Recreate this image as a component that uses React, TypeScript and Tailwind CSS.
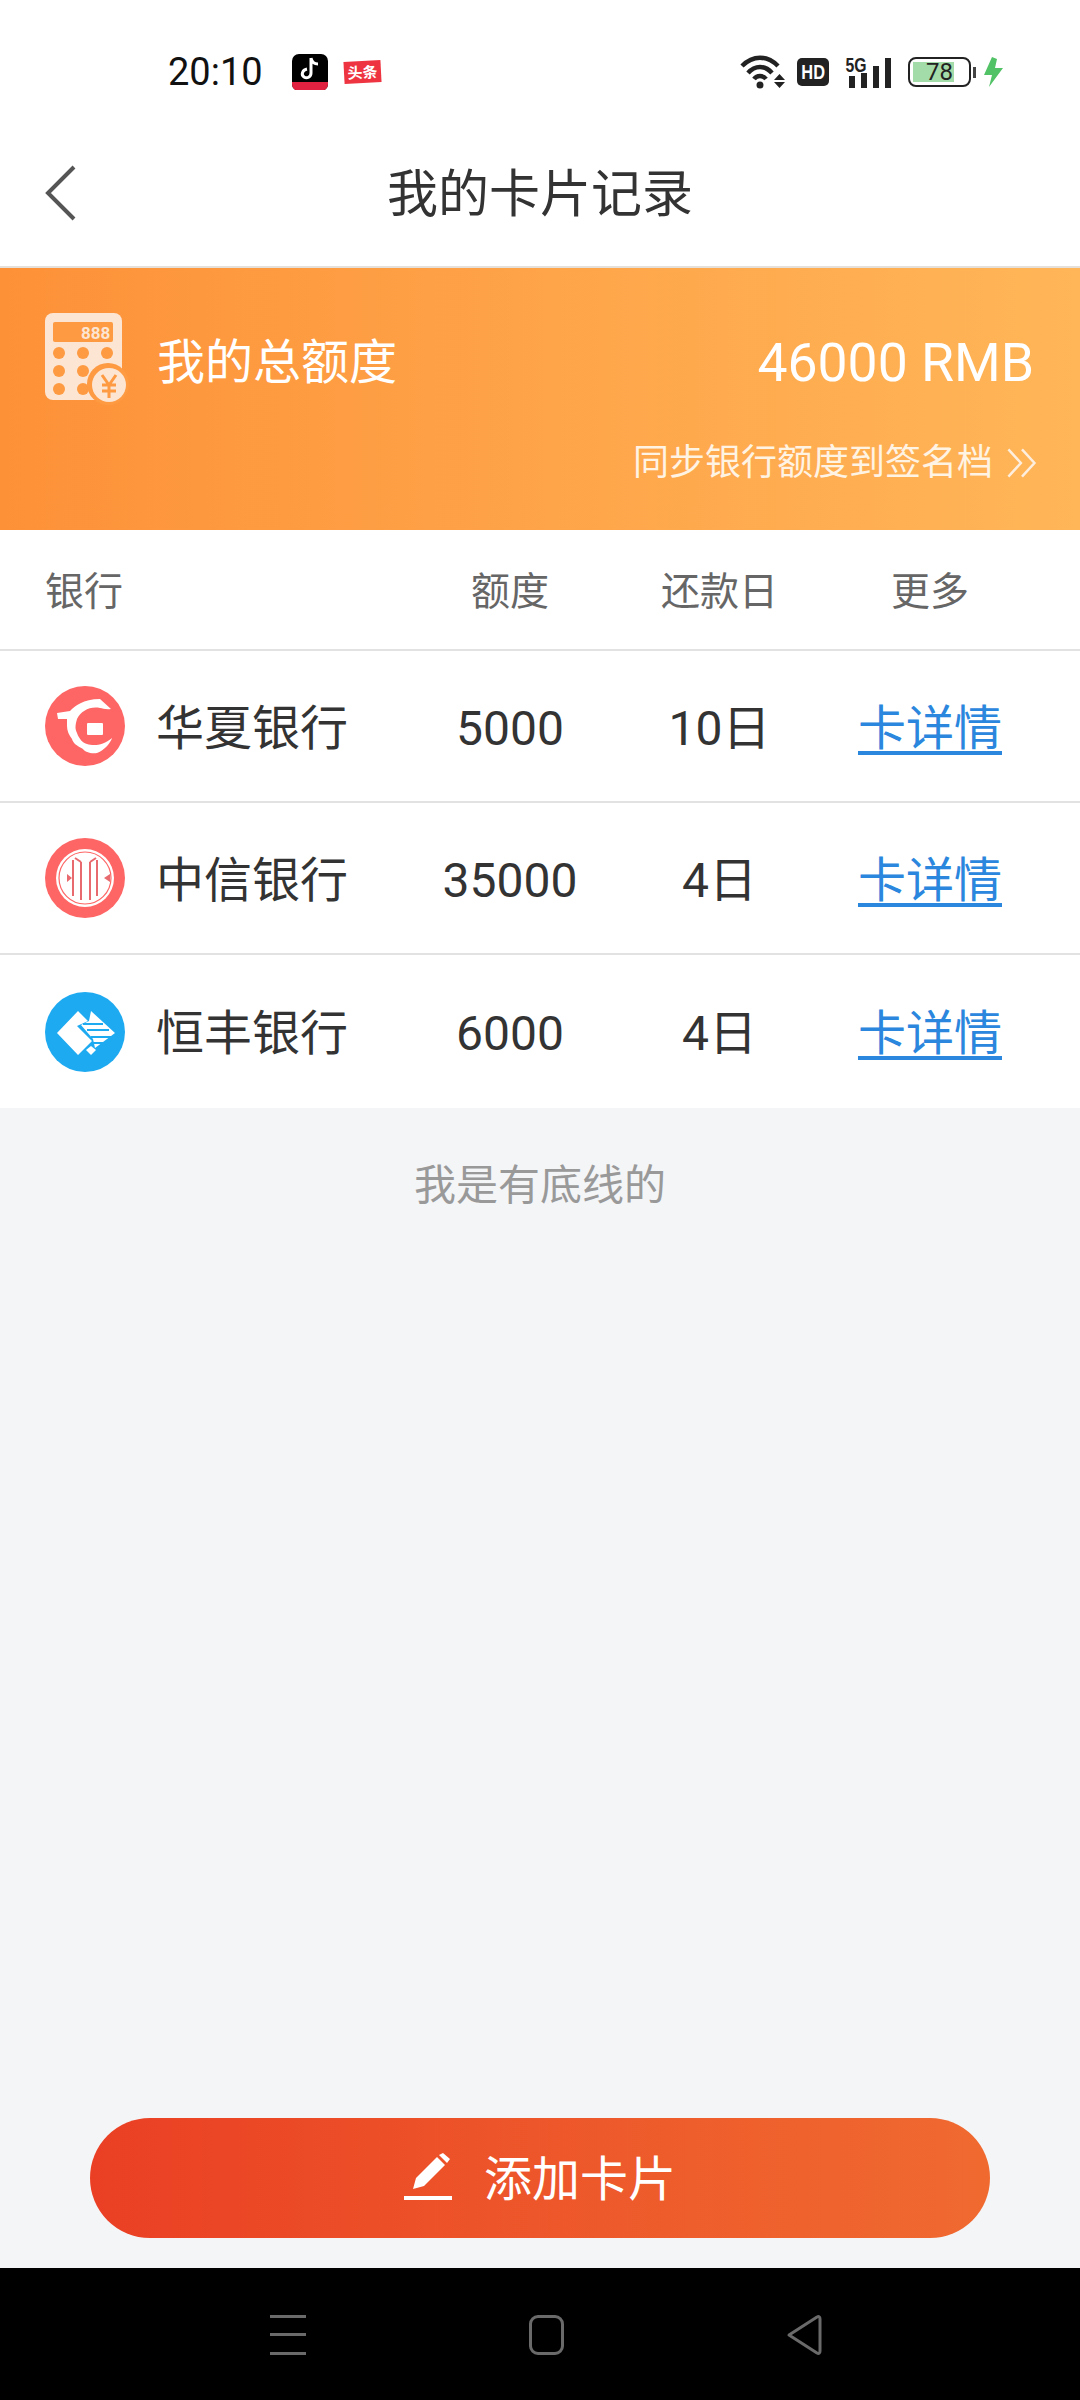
const cjk = "font-['Roboto','Noto_Sans_CJK_SC',sans-serif]";

const banks = [
  { name: "华夏银行", limit: "5000", due: "10日", logo: <HuaxiaLogo />, height: "h-[152px]" },
  { name: "中信银行", limit: "35000", due: "4日", logo: <CiticLogo />, height: "h-[152px]" },
  { name: "恒丰银行", limit: "6000", due: "4日", logo: <HengfengLogo />, height: "h-[153px]" },
];

function HuaxiaLogo() {
  return (
    <svg width="80" height="80" viewBox="0 0 80 80">
      <circle cx="40" cy="40" r="40" fill="#fe6565" />
      <path
        d="M12 27 L25 25 C30 20 38 13 55 13 L66 23 C60 24 58 22 55 22 C45 20 36 25 32 33 C30 40 30 43 32 47 C34 53 38 57 42 58 C48 60 58 60 67 52 C66 56 60 64 52 67 C46 68 40 66 38 63 C32 60 28 57 27 53 C24 49 22 45 22 40 L22 33 L13 33 Z"
        fill="#fff"
      />
      <rect x="42" y="37" width="16" height="12" rx="1" fill="#fff" />
    </svg>
  );
}

function CiticLogo() {
  return (
    <svg width="80" height="80" viewBox="0 0 80 80">
      <circle cx="40" cy="40" r="40" fill="#fe6565" />
      <circle cx="40" cy="40" r="29" fill="#fff" />
      <circle cx="40" cy="40" r="26" fill="none" stroke="#fe6565" strokeWidth="1.2" />
      <g fill="none" stroke="#e86a6e" strokeWidth="2">
        <path d="M28 22 V58" />
        <path d="M52 22 V58" />
        <path d="M36 24 L36 62" />
        <path d="M45 24 L45 62" />
        <path d="M36 24 L30 20" />
        <path d="M45 24 L51 20" />
      </g>
      <path d="M22 36 L27 40 L22 44 Z" fill="#e86a6e" />
      <path d="M65 36 L59 40 L65 44 Z" fill="#e86a6e" />
    </svg>
  );
}

function HengfengLogo() {
  return (
    <svg width="80" height="80" viewBox="0 0 80 80">
      <circle cx="40" cy="40" r="40" fill="#1eaaf1" />
      <path d="M12 41 L33 19 L43 29 L32 34 L47 49 L33 63 Z" fill="#fff" />
      <path d="M46 19 L70 41 L50 56 L48 47 L36 33 L44 29 Z" fill="#fff" />
      <path d="M38 32 H58 M42 38 H64 M46 45 H68 M46 51 H62" stroke="#1eaaf1" strokeWidth="1.8" />
      <path d="M46 54 L51 58 L46 63 L41 58 Z" fill="#fff" />
    </svg>
  );
}

function CalculatorIcon() {
  return (
    <svg width="84" height="92" viewBox="0 0 84 92">
      <rect x="0" y="0" width="77" height="87" rx="8" fill="#fce5d2" />
      <rect x="8" y="9" width="60" height="20" rx="2" fill="#fd9a42" />
      <text x="36" y="26" fontSize="17" fontWeight="700" fill="#fce5d2" fontFamily="Roboto">888</text>
      {[8, 26, 44].flatMap((y) =>
        [14, 38, 62].map((x) => <circle key={`${x}-${y}`} cx={x} cy={y + 32} r="6" fill="#fd9a42" />),
      )}
      <circle cx="63" cy="71" r="21" fill="#fd9a42" />
      <circle cx="64" cy="72" r="17" fill="#fce5d2" />
      <path d="M57 62 L64 72 L71 62 M57 72 H71 M57 78 H71 M64 72 V85" stroke="#fd9a42" strokeWidth="3" fill="none" />
    </svg>
  );
}

function StatusBar() {
  return (
    <div className={`h-[90px] shrink-0 bg-white flex items-center pt-[54px] pl-[168px] pr-[76px] ${cjk}`}>
      <span className="text-[38px] leading-none text-[#111] w-[124px]">20:10</span>
      <div className="relative w-[36px] h-[37px] rounded-[7px] bg-black overflow-hidden flex justify-center">
        <svg width="22" height="26" viewBox="0 0 22 26" className="mt-[2px]">
          <path d="M12 2 V17 C12 21 8 23 5 21 C2 19 3 14 8 13 M12 2 C13 6 16 8 19 8" fill="none" stroke="#fff" strokeWidth="3" />
        </svg>
        <div className="absolute bottom-0 inset-x-0 h-[9px] bg-[#e0213f]" />
      </div>
      <div className="ml-[16px] w-[37px] h-[22px] -rotate-3 bg-[#ee3440] text-white text-[15px] leading-[22px] font-bold text-center font-['Noto_Sans_CJK_SC',sans-serif]">
        头条
      </div>
      <div className="ml-auto flex items-center">
        <svg width="48" height="34" viewBox="0 0 48 34">
          <path d="M3 11 C14 0 28 0 39 11" fill="none" stroke="#222" strokeWidth="4.5" />
          <path d="M9 18 C16 10 26 10 33 18" fill="none" stroke="#222" strokeWidth="4.5" />
          <path d="M15 24 C18 20 24 20 27 24" fill="none" stroke="#222" strokeWidth="4.5" />
          <circle cx="21" cy="30" r="3.5" fill="#222" />
          <path d="M35 25 L40.5 19 L46 25 Z M35 27 H46 L40.5 33 Z" fill="#222" />
        </svg>
        <div className="ml-[10px] w-[32px] h-[28px] rounded-[5px] bg-[#222] text-white text-[21px] leading-[28px] font-bold text-center font-['Liberation_Sans',sans-serif]">
          <span className="inline-block scale-x-[0.78]">HD</span>
        </div>
        <div className="relative ml-[16px] w-[49px] h-[32px]">
          <span className="absolute -left-[3px] -top-[2px] text-[21px] leading-[21px] font-bold text-[#222] font-['Liberation_Sans',sans-serif] scale-x-[0.75]">
            5G
          </span>
          <div className="absolute inset-0 flex items-end gap-[6px] pl-[4px]">
            <div className="w-[6px] h-[12px] bg-[#222]" />
            <div className="w-[6px] h-[15px] bg-[#222]" />
            <div className="w-[6px] h-[22px] bg-[#222]" />
            <div className="w-[6px] h-[30px] bg-[#222]" />
          </div>
        </div>
        <div className="relative ml-[14px] w-[63px] h-[30px] rounded-[8px] border-[2px] border-[#222] p-[3px]">
          <div className="w-[41px] h-full bg-[#a3dba9]" />
          <span className="absolute inset-0 text-center text-[24px] leading-[26px] text-[#222]">78</span>
        </div>
        <div className="ml-[2px] w-[3px] h-[11px] bg-[#444]" />
        <svg width="20" height="30" viewBox="0 0 20 30" className="ml-[8px]">
          <path d="M8 0 L0 18 H8 L5 30 L19 11 H11 L13 2 Z" fill="#52c266" />
        </svg>
      </div>
    </div>
  );
}

export default function App() {
  return (
    <div className={`w-[1080px] h-[2400px] flex flex-col bg-[#f4f5f7] ${cjk}`}>
      <StatusBar />

      {/* 标题栏 */}
      <div className="relative h-[178px] shrink-0 bg-white border-b-2 border-[#e5e0da] flex items-center justify-center pt-[33px]">
        <svg width="34" height="58" viewBox="0 0 34 58" className="absolute left-[44px] top-[74px]">
          <path d="M30 3 L4 29 L30 55" fill="none" stroke="#555" strokeWidth="4" />
        </svg>
        <span className="text-[51px] leading-none text-[#333]">我的卡片记录</span>
      </div>

      {/* 总额度 */}
      <div className="h-[262px] shrink-0 bg-gradient-to-r from-[#fd9138] to-[#ffb658] pl-[45px] pr-[46px] pt-[45px]">
        <div className="flex items-start">
          <CalculatorIcon />
          <span className="ml-[28px] mt-[19px] text-[48px] leading-[62px] text-white">我的总额度</span>
          <span className="ml-auto mt-[19px] text-[53.5px] leading-[62px] text-white">46000 RMB</span>
        </div>
        <div className="mt-[33px] flex items-center justify-end text-[36px] leading-[50px] text-[#fff3e4]">
          <span>同步银行额度到签名档</span>
          <svg width="34" height="34" viewBox="0 0 30 30" className="ml-[12px] -mr-[5px]">
            <path d="M3 3 L14 15 L3 27 M15 3 L26 15 L15 27" fill="none" stroke="#fdeedd" strokeWidth="2.2" />
          </svg>
        </div>
      </div>

      {/* 列表 */}
      <div className="shrink-0 bg-white">
        <div className="h-[121px] pl-[45px] pt-[5px] grid grid-cols-[375px_180px_236px_188px] items-center text-[39px] text-[#666] border-b-2 border-[#e2e2e2]">
          <span>银行</span>
          <span className="text-center">额度</span>
          <span className="text-center pl-[3px]">还款日</span>
          <span className="text-center">更多</span>
        </div>
        {banks.map((bank, index) => (
          <div
            key={bank.name}
            className={`${bank.height} pl-[45px] grid grid-cols-[375px_180px_236px_188px] items-center text-[48px] text-[#333] ${
              index < banks.length - 1 ? "border-b-2 border-[#e2e2e2]" : ""
            }`}
          >
            <div className="flex items-center">
              {bank.logo}
              <span className="ml-[31px] pt-[5px]">{bank.name}</span>
            </div>
            <span className="text-center pt-[5px]">{bank.limit}</span>
            <span className="text-center pt-[5px] pl-[3px]">{bank.due}</span>
            <span className="text-center pt-[5px] text-[#2b86dd] underline underline-offset-[6px]">卡详情</span>
          </div>
        ))}
      </div>

      <div className="flex-1 flex flex-col">
        <p className="mt-[53px] text-center text-[42px] leading-[50px] text-[#999]">我是有底线的</p>
        <div className="mt-auto mb-[30px] mx-[90px] h-[120px] rounded-full bg-gradient-to-r from-[#ea3f24] to-[#f06a30] flex items-center justify-center text-white text-[48px]">
          <svg width="50" height="50" viewBox="0 0 50 50" className="mr-[30px]">
            <path d="M9 36 L12 25 L33 4 L41 12 L20 33 Z M35 2 L39 0 L46 6 L43 10 Z" fill="#fff" />
            <rect x="0" y="43" width="48" height="4" fill="#fff" />
          </svg>
          <span className="pt-[3px]">添加卡片</span>
        </div>
      </div>

      {/* 系统导航栏 */}
      <div className="h-[132px] shrink-0 bg-black flex items-center justify-between pl-[270px] pr-[258px] pt-[1px]">
        <div className="w-[36px] h-[40px] flex flex-col justify-between">
          <div className="h-[3px] bg-[#6a6a6a]" />
          <div className="h-[3px] bg-[#6a6a6a]" />
          <div className="h-[3px] bg-[#6a6a6a]" />
        </div>
        <div className="w-[35px] h-[40px] rounded-[9px] border-[3px] border-[#6a6a6a]" />
        <svg width="36" height="42" viewBox="0 0 36 42">
          <path d="M3 21 L31 3 C33 2 34 3 34 5 V37 C34 39 33 40 31 39 Z" fill="none" stroke="#6a6a6a" strokeWidth="3" strokeLinejoin="round" />
        </svg>
      </div>
    </div>
  );
}
